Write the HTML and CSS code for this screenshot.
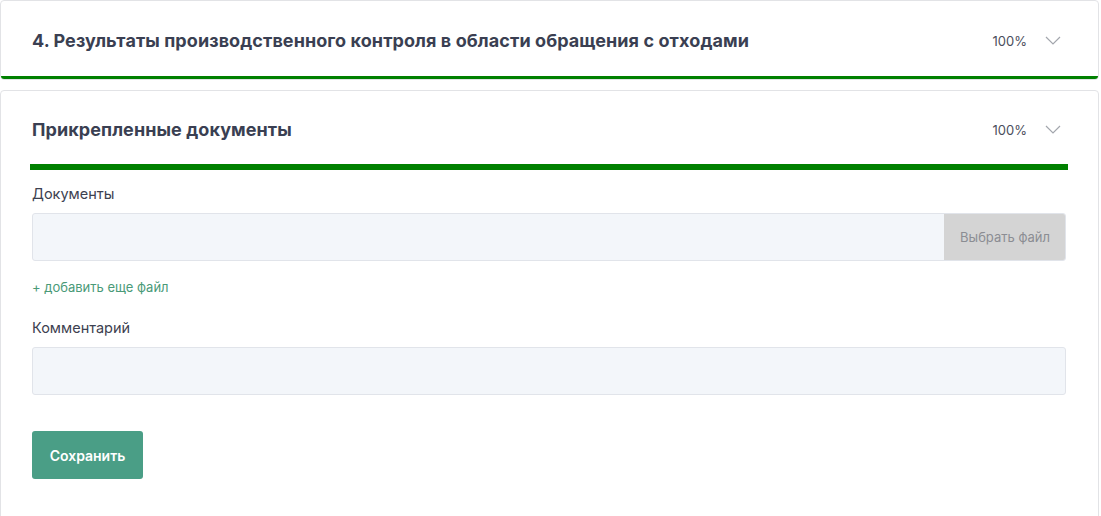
FILE: index.html
```html
<!DOCTYPE html>
<html lang="ru">
  <head>
    <meta charset="UTF-8" />
    <meta name="viewport" content="width=device-width, initial-scale=1.0" />
    <title>Отчёт</title>
    <link rel="stylesheet" href="styles.css">
  </head>
  <body>
    <div class="section section-closed">
      <div class="section-head">
        <h2 class="section-title">4. Результаты производственного контроля в области обращения с отходами</h2>
        <span class="section-percent">100%</span>
        <svg class="chevron" width="16" height="9" viewBox="0 0 16 9">
          <path d="M1 1l7 7 7-7" fill="none" stroke="#a3a6ad" stroke-width="1.2" />
        </svg>
      </div>
      <div class="progress progress-full"></div>
    </div>

    <div class="section section-open">
      <div class="section-head">
        <h2 class="section-title">Прикрепленные документы</h2>
        <span class="section-percent">100%</span>
        <svg class="chevron" width="16" height="9" viewBox="0 0 16 9">
          <path d="M1 1l7 7 7-7" fill="none" stroke="#a3a6ad" stroke-width="1.2" />
        </svg>
      </div>
      <div class="progress progress-inner"></div>

      <div class="section-body">
        <label class="field-label">Документы</label>
        <div class="file-input">
          <div class="file-name"></div>
          <button class="file-btn">Выбрать файл</button>
        </div>
        <a class="add-file" href="#">+ добавить еще файл</a>

        <label class="field-label">Комментарий</label>
        <input class="text-input" type="text" />

        <button class="save-btn">Сохранить</button>
      </div>
    </div>
  </body>
</html>
```

FILE: styles.css
```css
body {
  margin: 0;
  background: #fff;
  font-family: Inter, "Noto Sans", Arial, sans-serif;
  color: #3a3f52;
  width: 1099px;
}

.section {
  border: 1px solid #e2e3e6;
  border-radius: 4px;
  overflow: hidden;
}

.section-closed {
  height: 78px;
  display: flex;
  flex-direction: column;
}

.section-open {
  margin-top: 10px;
  height: 440px;
}

.section-head {
  display: flex;
  align-items: center;
  box-sizing: border-box;
  padding: 4px 37px 0 31px;
}

.section-closed .section-head {
  height: 75px;
}

.section-open .section-head {
  height: 73px;
}

.section-title {
  margin: 0;
  flex: 1;
  font-size: 18px;
  font-weight: 700;
  color: #3a3f52;
  letter-spacing: 0.08px;
}

.section-percent {
  font-size: 13px;
  color: #4a4e5c;
  margin-right: 18px;
}

.chevron {
  display: block;
}

.progress {
  background: #008000;
}

.progress-full {
  height: 3px;
}

.progress-inner {
  height: 6px;
  margin: 0 30px 0 29px;
}

/* form */
.section-body {
  padding: 14px 32px 0 31px;
  display: flex;
  flex-direction: column;
  align-items: flex-start;
}

.field-label {
  font-size: 14.5px;
  color: #3d4150;
  line-height: 20px;
  margin-bottom: 9px;
}

.file-input {
  display: flex;
  width: 100%;
  height: 48px;
  box-sizing: border-box;
  border: 1px solid #e1e4ea;
  border-radius: 3px;
  background: #f3f6fa;
  overflow: hidden;
}

.file-name {
  flex: 1;
}

.file-btn {
  width: 122px;
  margin: -1px -1px -1px 0;
  border: none;
  background: #d4d4d4;
  color: #8b8d93;
  font-family: inherit;
  font-size: 13px;
  border-radius: 0 3px 3px 0;
}

.add-file {
  font-size: 13px;
  color: #4a9a78;
  text-decoration: none;
  margin: 18px 0 23px;
  line-height: 16px;
}

.text-input {
  width: 100%;
  height: 48px;
  box-sizing: border-box;
  border: 1px solid #e1e4ea;
  border-radius: 3px;
  background: #f3f6fa;
  font-family: inherit;
}

.save-btn {
  margin-top: 36px;
  width: 111px;
  height: 48px;
  border: none;
  border-radius: 3px;
  background: #4a9e86;
  color: #fff;
  font-family: inherit;
  font-size: 14px;
  font-weight: 600;
}
```
